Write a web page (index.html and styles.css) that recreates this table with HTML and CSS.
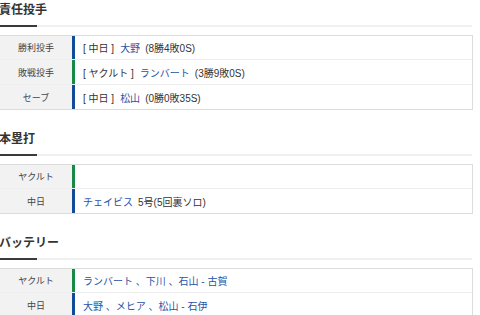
FILE: index.html
```html
<!DOCTYPE html>
<html lang="ja">
<head>
<meta charset="utf-8">
<link rel="stylesheet" href="styles.css">
</head>
<body>
<div class="page">
  <section class="sec">
    <h2 class="ttl"><span class="ttl-txt">責任投手</span></h2>
    <div class="tbl">
      <div class="row">
        <div class="lbl">勝利投手</div>
        <div class="val d"><span class="team">[ 中日 ]</span><a class="lnk">大野</a><span class="rec">(8勝4敗0S)</span></div>
      </div>
      <div class="row">
        <div class="lbl">敗戦投手</div>
        <div class="val s"><span class="team">[ ヤクルト ]</span><a class="lnk">ランバート</a><span class="rec">(3勝9敗0S)</span></div>
      </div>
      <div class="row">
        <div class="lbl">セーブ</div>
        <div class="val d"><span class="team">[ 中日 ]</span><a class="lnk">松山</a><span class="rec">(0勝0敗35S)</span></div>
      </div>
    </div>
  </section>
  <section class="sec">
    <h2 class="ttl"><span class="ttl-txt">本塁打</span></h2>
    <div class="tbl">
      <div class="row">
        <div class="lbl">ヤクルト</div>
        <div class="val s"></div>
      </div>
      <div class="row">
        <div class="lbl">中日</div>
        <div class="val d"><a class="lnk">チェイビス</a><span class="rec">5号(5回裏ソロ)</span></div>
      </div>
    </div>
  </section>
  <section class="sec">
    <h2 class="ttl"><span class="ttl-txt">バッテリー</span></h2>
    <div class="tbl">
      <div class="row">
        <div class="lbl">ヤクルト</div>
        <div class="val s"><a class="lnk">ランバート 、下川 、石山 - 古賀</a></div>
      </div>
      <div class="row">
        <div class="lbl">中日</div>
        <div class="val d"><a class="lnk">大野 、メヒア 、松山 - 石伊</a></div>
      </div>
    </div>
  </section>
</div>
</body>
</html>
```
FILE: styles.css
```css
html, body {
  margin: 0;
  padding: 0;
  background: #fff;
}
body {
  font-family: "Liberation Sans", "Noto Sans CJK JP", sans-serif;
  color: #333;
  overflow: hidden;
}
.page {
  margin-left: -1px;
  width: 478px;
  padding-top: 1px;
}
.sec {
  margin-bottom: 20px;
}
.ttl {
  margin: 0 0 8px 0;
  font-size: 12px;
  line-height: 18px;
  font-weight: bold;
  color: #333;
  padding-bottom: 6px;
  border-bottom: 2px solid #f0f0f0;
  position: relative;
  width: 473px;
}
.ttl-txt {
  display: inline-block;
}
.ttl::after {
  content: "";
  position: absolute;
  left: 0;
  bottom: -2px;
  width: 38px;
  height: 2px;
  background: #3a3a3a;
}
.tbl {
  border: 1px solid #dcdcdc;
  width: 472px;
}
.row {
  display: flex;
  height: 24px;
  border-top: 1px solid #eee;
}
.row:first-child {
  border-top: none;
  height: 23px;
}
.lbl {
  width: 72px;
  background: #f2f2f2;
  font-size: 9px;
  color: #444;
  display: flex;
  align-items: center;
  justify-content: center;
}
.val {
  flex: 1;
  border-left: 3px solid #124b98;
  padding-left: 8px;
  font-size: 10px;
  display: flex;
  align-items: center;
  color: #333;
}
.val.s {
  border-left-color: #178a48;
}
.val.d {
  border-left-color: #124b98;
}
.team {
  margin-right: 6px;
}
.lnk {
  color: #2653a8;
  text-decoration: none;
  margin-right: 5px;
}
```
